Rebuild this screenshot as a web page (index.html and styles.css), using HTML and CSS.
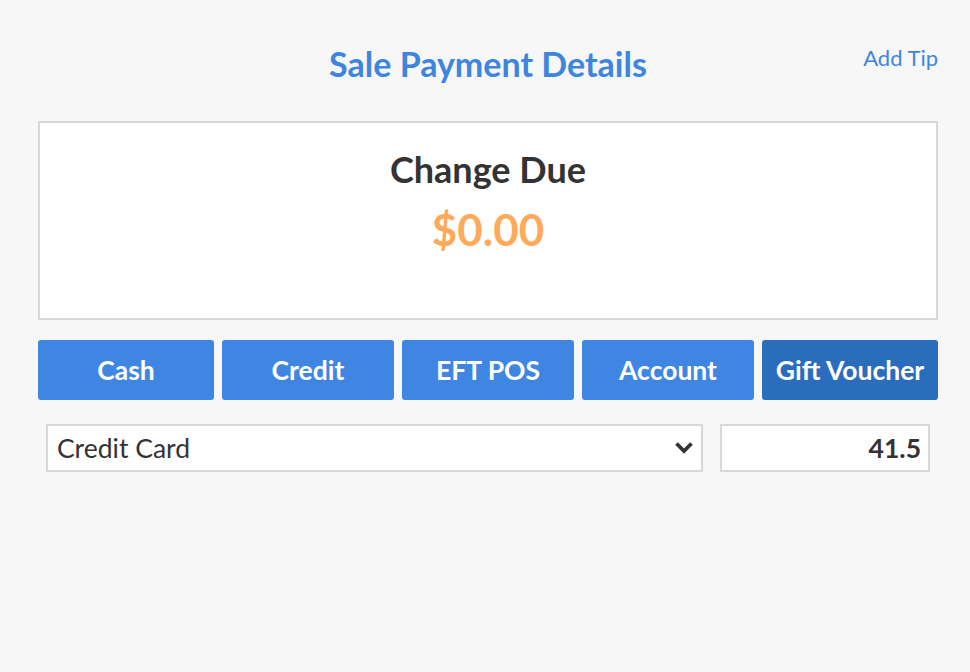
FILE: index.html
```html
<!DOCTYPE html>
<html>
<head>
<meta charset="utf-8">
<link rel="stylesheet" href="styles.css">
</head>
<body>
<div class="page">
  <header class="header">
    <h1 class="title">Sale Payment Details</h1>
    <a class="add-tip">Add Tip</a>
  </header>
  <section class="change-box">
    <div class="change-label">Change Due</div>
    <div class="change-amount">$0.00</div>
  </section>
  <nav class="methods">
    <button class="method">Cash</button>
    <button class="method">Credit</button>
    <button class="method">EFT POS</button>
    <button class="method">Account</button>
    <button class="method active">Gift Voucher</button>
  </nav>
  <div class="pay-row">
    <div class="select">
      <span class="select-text">Credit Card</span>
      <svg class="chevron" width="20" height="14" viewBox="0 0 20 14"><path d="M2.5 2.5 L10 10 L17.5 2.5" fill="none" stroke="#333" stroke-width="3.8" stroke-linecap="butt" stroke-linejoin="miter"/></svg>
    </div>
    <div class="amount-input">41.5</div>
  </div>
</div>
</body>
</html>
```

FILE: styles.css
```css
html, body {
  margin: 0;
  padding: 0;
  background: #f7f7f7;
  width: 970px;
  height: 672px;
  overflow: hidden;
  font-family: Lato, "Open Sans", sans-serif;
}
.page {
  padding: 0 32px 0 38px;
}
.header {
  position: relative;
  height: 121px;
  box-sizing: border-box;
  padding-top: 44px;
}
.title {
  margin: 0;
  text-align: center;
  font-size: 34px;
  line-height: 40px;
  font-weight: 700;
  color: #3d86e0;
}
.add-tip {
  position: absolute;
  right: 0;
  top: 44px;
  font-size: 22px;
  line-height: 28px;
  color: #3d86e0;
}
.change-box {
  height: 199px;
  box-sizing: border-box;
  border: 2px solid #d8d8d8;
  background: #ffffff;
  text-align: center;
  padding-top: 24px;
}
.change-label {
  font-size: 36px;
  font-weight: 700;
  line-height: 44px;
  color: #333333;
}
.change-amount {
  margin-top: 13px;
  font-size: 44px;
  font-weight: 700;
  line-height: 50px;
  color: #ffaa5a;
}
.methods {
  display: grid;
  grid-template-columns: 176px 172px 172px 172px 176px;
  gap: 8px;
  margin-top: 20px;
}
.method {
  height: 60px;
  border: none;
  border-radius: 3px;
  background: #3e86e1;
  color: #ffffff;
  font-family: Lato, "Open Sans", sans-serif;
  font-size: 26.5px;
  font-weight: 700;
  padding: 0;
}
.method.active {
  background: #2b6dbd;
}
.pay-row {
  display: flex;
  gap: 17px;
  margin: 24px 8px 0 8px;
}
.select {
  width: 658px;
  height: 48px;
  box-sizing: border-box;
  border: 2px solid #d8d8d8;
  background: #ffffff;
  display: flex;
  align-items: center;
  justify-content: space-between;
  padding: 0 7px 0 9px;
}
.select-text {
  font-size: 26.5px;
  color: #333333;
}
.chevron {
  display: block;
}
.amount-input {
  width: 210px;
  height: 48px;
  box-sizing: border-box;
  border: 2px solid #d8d8d8;
  background: #ffffff;
  text-align: right;
  padding-right: 7px;
  font-size: 26.5px;
  font-weight: 700;
  line-height: 44px;
  color: #333333;
}
```
